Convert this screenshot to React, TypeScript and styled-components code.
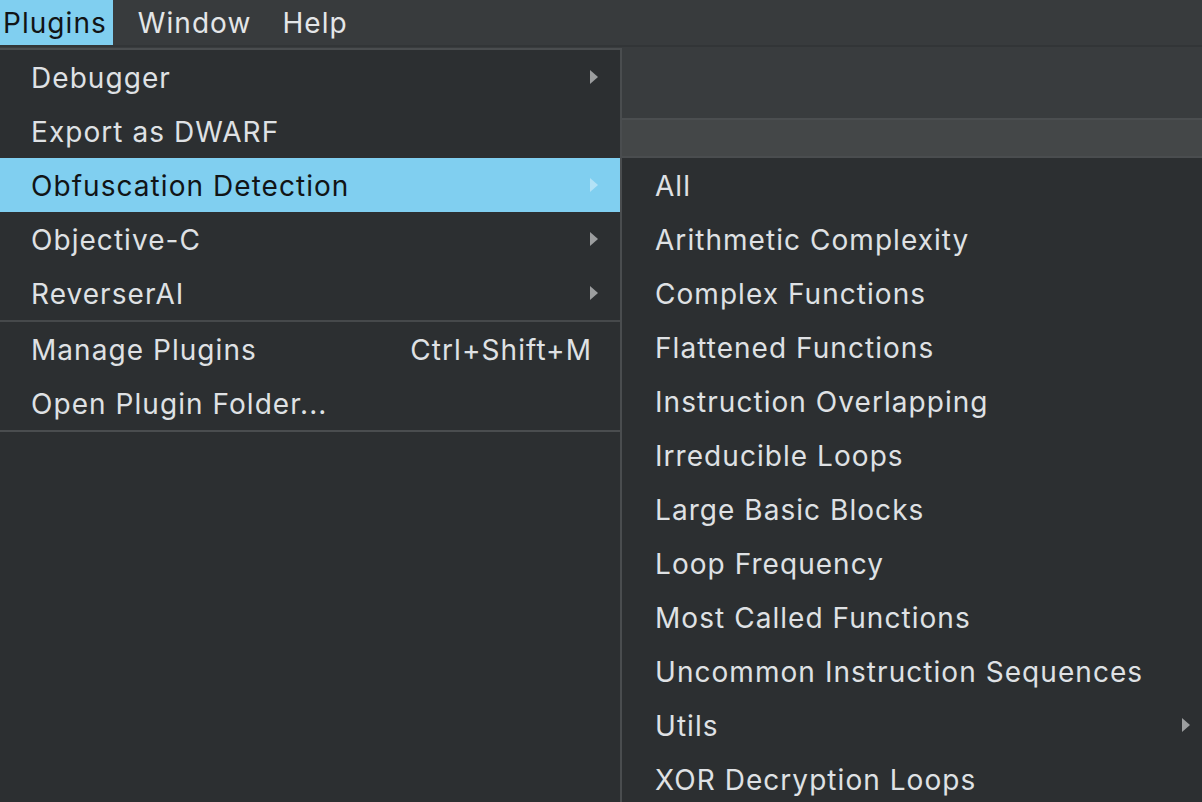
import React from "react";
import styled, { createGlobalStyle } from "styled-components";

const GlobalStyle = createGlobalStyle`
  html, body {
    margin: 0;
    padding: 0;
    background: #2c2f31;
    overflow: hidden;
  }
  body {
    font-family: Inter, "Noto Sans", sans-serif;
  }
`;

const Page = styled.div`
  position: relative;
  width: 1202px;
  height: 802px;
  overflow: hidden;
  display: flex;
  flex-direction: column;
  background: #2c2f31;
`;

const MenuBar = styled.div`
  height: 45px;
  display: flex;
  align-items: stretch;
  gap: 22px;
  background: #383b3d;
  border-bottom: 2px solid #323537;
`;

const BarItem = styled.div<{ $active?: boolean }>`
  display: flex;
  align-items: center;
  padding: 0 6px 0 3px;
  font-size: 28px;
  letter-spacing: 1.05px;
  color: ${(p) => (p.$active ? "#111416" : "#e4e6e8")};
  background: ${(p) => (p.$active ? "#80cff0" : "transparent")};
`;

const Toolbar = styled.div`
  height: 71px;
  background: #393c3e;
  border-bottom: 2px solid #4b4e50;
`;

const TabBar = styled.div`
  height: 36px;
  background: #444748;
`;

const Content = styled.div`
  flex: 1;
  background: #2c2f31;
`;

const Menu = styled.div<{ $left: number; $top: number; $width: number }>`
  position: absolute;
  left: ${(p) => p.$left}px;
  top: ${(p) => p.$top}px;
  width: ${(p) => p.$width}px;
  background: #2c2f31;
  border: 2px solid #4a4d4f;
  border-left: none;
  box-sizing: border-box;
`;

const SubMenu = styled(Menu)`
  border-left: 2px solid #4a4d4f;
  border-bottom: none;
  bottom: -10px;
`;

const Item = styled.div<{ $active?: boolean; $pad: number }>`
  height: 54px;
  box-sizing: border-box;
  display: flex;
  align-items: center;
  padding: 2px 22px 0 ${(p) => p.$pad}px;
  font-size: 28px;
  letter-spacing: 1.05px;
  color: ${(p) => (p.$active ? "#111416" : "#dfe1e4")};
  background: ${(p) => (p.$active ? "#80cff0" : "transparent")};
`;

const Label = styled.span`
  flex: 1;
  white-space: nowrap;
`;

const Shortcut = styled.span`
  margin-right: 6px;
  white-space: nowrap;
`;

const Separator = styled.div`
  height: 2px;
  background: #46494b;
`;

const Arrow = styled.span<{ $active?: boolean }>`
  width: 0;
  height: 0;
  margin-top: -2px;
  border-top: 7px solid transparent;
  border-bottom: 7px solid transparent;
  border-left: 8px solid ${(p) => (p.$active ? "#b3e2f6" : "#9c9e9f")};
`;

type Entry = { label: string; sub?: boolean; shortcut?: string; active?: boolean };

const mainTop: Entry[] = [
  { label: "Debugger", sub: true },
  { label: "Export as DWARF" },
  { label: "Obfuscation Detection", sub: true, active: true },
  { label: "Objective-C", sub: true },
  { label: "ReverserAI", sub: true },
];

const mainBottom: Entry[] = [
  { label: "Manage Plugins", shortcut: "Ctrl+Shift+M" },
  { label: "Open Plugin Folder..." },
];

const subEntries: Entry[] = [
  { label: "All" },
  { label: "Arithmetic Complexity" },
  { label: "Complex Functions" },
  { label: "Flattened Functions" },
  { label: "Instruction Overlapping" },
  { label: "Irreducible Loops" },
  { label: "Large Basic Blocks" },
  { label: "Loop Frequency" },
  { label: "Most Called Functions" },
  { label: "Uncommon Instruction Sequences" },
  { label: "Utils", sub: true },
  { label: "XOR Decryption Loops" },
];

const MenuRow = ({ entry, pad }: { entry: Entry; pad: number }) => (
  <Item $active={entry.active} $pad={pad}>
    <Label>{entry.label}</Label>
    {entry.shortcut && <Shortcut>{entry.shortcut}</Shortcut>}
    {entry.sub && <Arrow $active={entry.active} />}
  </Item>
);

export default function App() {
  return (
    <>
      <GlobalStyle />
      <Page>
        <MenuBar>
          <BarItem $active>Plugins</BarItem>
          <BarItem>Window</BarItem>
          <BarItem>Help</BarItem>
        </MenuBar>
        <Toolbar />
        <TabBar />
        <Content />

        <Menu $left={0} $top={48} $width={622}>
          {mainTop.map((e) => (
            <MenuRow key={e.label} entry={e} pad={31} />
          ))}
          <Separator />
          {mainBottom.map((e) => (
            <MenuRow key={e.label} entry={e} pad={31} />
          ))}
        </Menu>

        <SubMenu $left={620} $top={156} $width={594}>
          {subEntries.map((e) => (
            <MenuRow key={e.label} entry={e} pad={33} />
          ))}
        </SubMenu>
      </Page>
    </>
  );
}
